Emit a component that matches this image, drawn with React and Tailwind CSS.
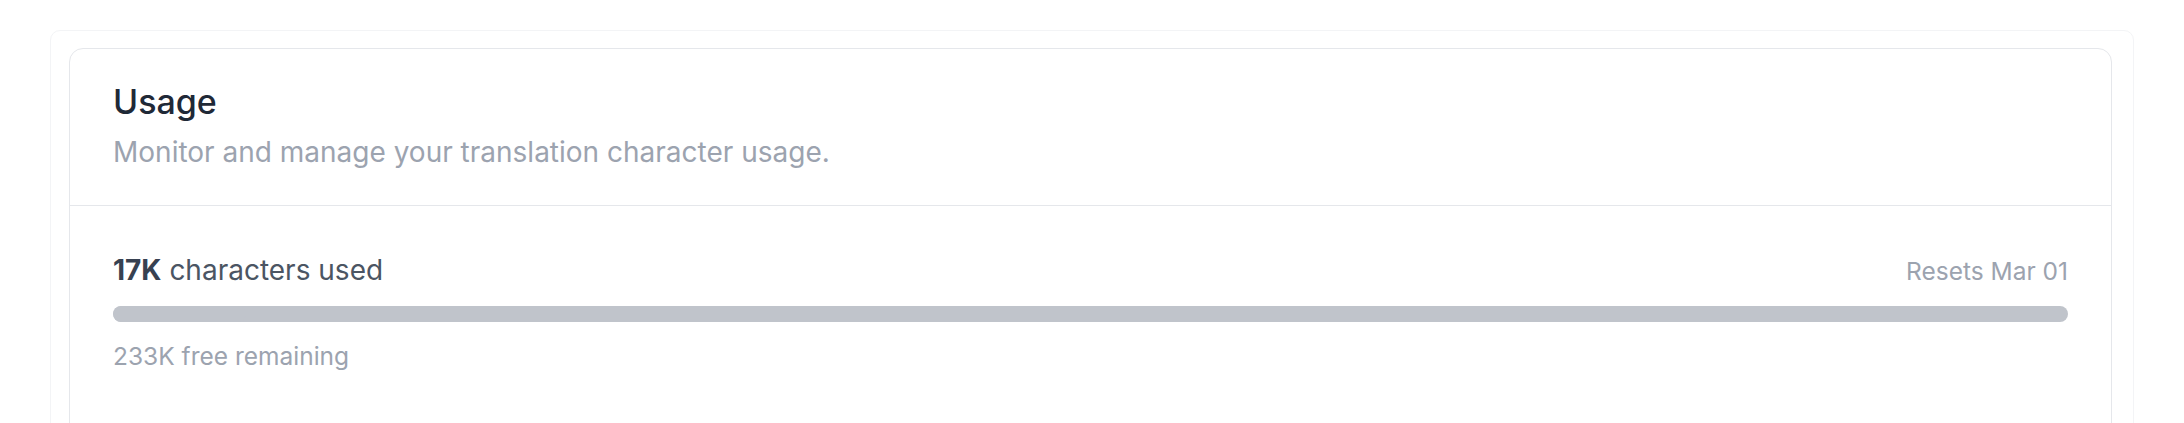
export default function App() {
  const used = 17000;
  const total = 250000;
  const pct = Math.min(100, (used / total) * 100);

  return (
    <div className="h-[423px] bg-white overflow-hidden" style={{ fontFamily: 'Inter, "Noto Sans", sans-serif' }}>
      <div className="mx-[50px] pt-[30px]">
        <div className="border border-[#f3f4f6] rounded-t-[10px] pl-[18px] pr-[21px] pt-[17px]">
          <div className="border-[1.5px] border-[#e5e7eb] rounded-[14px] bg-white">
            {/* header */}
            <div className="px-[43px] pt-[33px] pb-[35px]">
              <h2 className="text-[34px] leading-[40px] font-medium text-[#1f2937]">Usage</h2>
              <p className="mt-3 text-[28px] leading-[36px] text-[#9ca3af]">
                Monitor and manage your translation character usage.
              </p>
            </div>

            <div className="border-t-[1.5px] border-[#e5e7eb]" />

            {/* usage */}
            <div className="px-[43px] pt-[46px] pb-[120px]">
              <div className="flex items-baseline justify-between">
                <span className="text-[28px] leading-[36px] text-[#4b5563]">
                  <span className="font-bold text-[#374151]">17K</span> characters used
                </span>
                <span className="text-[24.5px] leading-[32px] text-[#9ca3af]">Resets Mar 01</span>
              </div>
              <div className="mt-[18px] h-[16px] w-full rounded-full bg-[#c0c4cb] overflow-hidden">
                <div className="h-full rounded-full bg-[#c0c4cb]" style={{ width: `${pct}%` }} />
              </div>
              <p className="mt-[18px] text-[24.5px] leading-[32px] text-[#9ca3af]">233K free remaining</p>
            </div>
          </div>
        </div>
      </div>
    </div>
  );
}
